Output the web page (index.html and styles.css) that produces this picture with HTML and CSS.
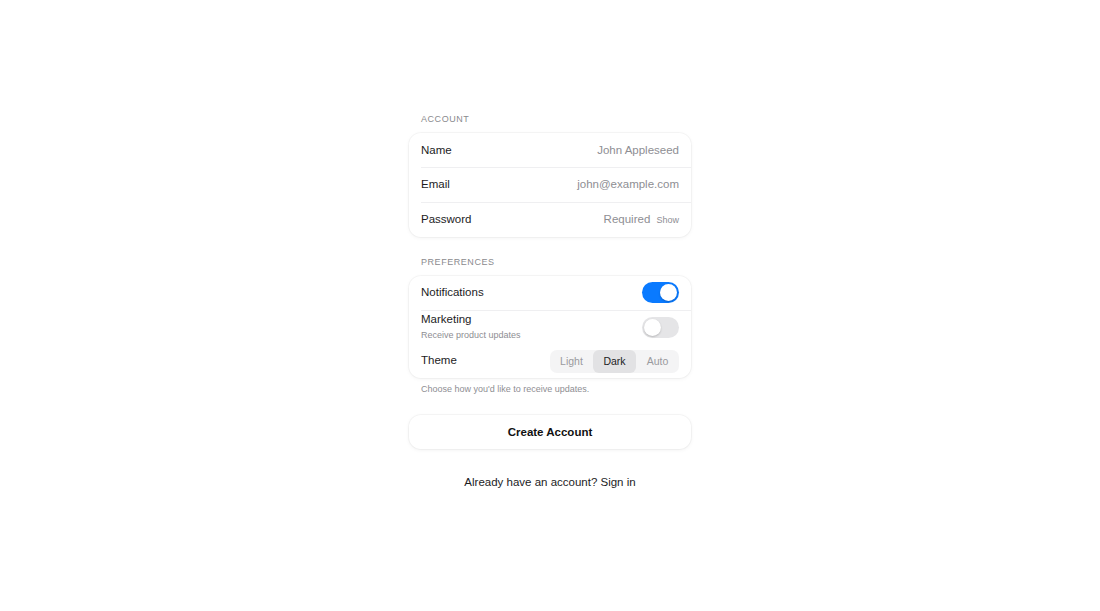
FILE: index.html
```html
<!DOCTYPE html>
<html lang="en">
<head>
<meta charset="utf-8">
<title>Create Account</title>
<link rel="stylesheet" href="styles.css">
</head>
<body>
<main class="page">
  <div class="form">
    <section class="group">
      <h2 class="group-label">ACCOUNT</h2>
      <div class="card">
        <div class="row row-first">
          <span class="row-label">Name</span>
          <span class="row-value">John Appleseed</span>
        </div>
        <div class="row">
          <span class="row-label">Email</span>
          <span class="row-value">john@example.com</span>
        </div>
        <div class="row">
          <span class="row-label">Password</span>
          <span class="row-value">Required <span class="show">Show</span></span>
        </div>
      </div>
    </section>

    <section class="group">
      <h2 class="group-label">PREFERENCES</h2>
      <div class="card">
        <div class="row row-first row-notif">
          <span class="row-label">Notifications</span>
          <span class="toggle on"><span class="knob"></span></span>
        </div>
        <div class="row row-tall">
          <span class="row-text">
            <span class="row-label">Marketing</span>
            <span class="row-sub">Receive product updates</span>
          </span>
          <span class="toggle"><span class="knob"></span></span>
        </div>
        <div class="row row-theme">
          <span class="row-label">Theme</span>
          <span class="segmented">
            <span class="seg">Light</span>
            <span class="seg active">Dark</span>
            <span class="seg">Auto</span>
          </span>
        </div>
      </div>
      <p class="group-footer">Choose how you'd like to receive updates.</p>
    </section>

    <button class="primary" type="button">Create Account</button>
    <p class="signin">Already have an account? Sign in</p>
  </div>
</main>
</body>
</html>
```

FILE: styles.css
```css
* { box-sizing: border-box; }
html, body { margin: 0; padding: 0; background: #fff; }
body {
  font-family: "Liberation Sans", Arial, Helvetica, sans-serif;
  color: #1c1c1e;
}
.page {
  min-height: 611px;
  display: flex;
  justify-content: center;
  padding-top: 113px;
}
.form {
  width: 282px;
  display: flex;
  flex-direction: column;
}
.group { margin-bottom: 19px; }
.group + .group { margin-bottom: 0; }
.group-label {
  margin: 0 0 8px 12px;
  font-size: 9px;
  font-weight: 400;
  letter-spacing: 0.55px;
  color: #8a8a8e;
  line-height: 12px;
}
.card {
  background: #fff;
  border-radius: 12px;
  box-shadow: 0 0 0 1px rgba(0,0,0,0.03), 0 1px 4px rgba(0,0,0,0.05);
}
.row {
  height: 35px;
  display: flex;
  align-items: center;
  justify-content: space-between;
  padding: 0 12px 1px;
  position: relative;
  font-size: 11.5px;
  line-height: 14px;
}
.row-first { height: 34px; }
.row-notif { padding-bottom: 2px; }
.row + .row::before {
  content: "";
  position: absolute;
  top: 0;
  left: 12px;
  right: 0;
  height: 1px;
  background: #efeff1;
}
.row-tall { height: 36px; }
.row-theme { height: 32px; padding-bottom: 4px; }
.row-theme::before { display: none; }
.row-label { color: #1c1c1e; }
.row-value { color: #8e8e93; }
.show { font-size: 9px; margin-left: 3px; color: #8e8e93; }
.row-text { display: flex; flex-direction: column; margin-bottom: 2px; }
.row-text .row-label { line-height: 13px; }
.row-sub { font-size: 9px; line-height: 11px; color: #8e8e93; margin-top: 4px; }
.toggle {
  width: 37px;
  height: 21px;
  border-radius: 11px;
  background: #e5e5e7;
  position: relative;
  flex: none;
}
.toggle.on { background: #0a7aff; }
.knob {
  position: absolute;
  top: 2px;
  left: 2px;
  width: 17px;
  height: 17px;
  border-radius: 50%;
  background: #fff;
  box-shadow: 0 1px 2px rgba(0,0,0,0.2);
}
.toggle.on .knob { left: 18px; }
.segmented {
  display: flex;
  background: #f4f4f5;
  border-radius: 7px;
  height: 23px;
  margin-top: 2px;
}
.seg {
  width: 43px;
  display: flex;
  align-items: center;
  justify-content: center;
  font-size: 10.5px;
  color: #9a9a9e;
  border-radius: 6px;
}
.seg.active { background: #e2e2e4; color: #1c1c1e; }
.group-footer {
  margin: 5px 0 0 12px;
  font-size: 9px;
  color: #8e8e93;
  line-height: 12px;
}
.primary {
  margin-top: 20px;
  height: 34px;
  border: none;
  border-radius: 12px;
  background: #fff;
  box-shadow: 0 0 0 1px rgba(0,0,0,0.03), 0 1px 4px rgba(0,0,0,0.06);
  font-family: inherit;
  font-size: 11.5px;
  font-weight: 700;
  color: #111;
  padding: 0 0 1px;
}
.signin {
  margin: 26px 0 0;
  text-align: center;
  font-size: 11.5px;
  color: #1c1c1e;
  line-height: 14px;
}
```
